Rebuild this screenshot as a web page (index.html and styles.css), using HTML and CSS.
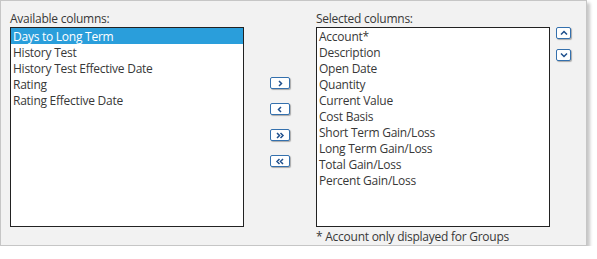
FILE: index.html
```html
<!DOCTYPE html>
<html lang="en">
<head>
    <meta charset="UTF-8">
    <title>Columns</title>
    <link rel="stylesheet" href="styles.css">
</head>
<body>
    <div class="panel">
        <div class="column">
            <div class="label">Available columns:</div>
            <div class="listbox">
                <div class="item selected">Days to Long Term</div>
                <div class="item">History Test</div>
                <div class="item">History Test Effective Date</div>
                <div class="item">Rating</div>
                <div class="item">Rating Effective Date</div>
            </div>
        </div>

        <div class="moves">
            <button class="btn" title="Add">
                <svg width="8" height="7" viewBox="0 0 8 7"><path d="M3 1 L5.5 3.5 L3 6" /></svg>
            </button>
            <button class="btn" title="Remove">
                <svg width="8" height="7" viewBox="0 0 8 7"><path d="M5 1 L2.5 3.5 L5 6" /></svg>
            </button>
            <button class="btn" title="Add all">
                <svg width="10" height="7" viewBox="0 0 10 7"><path d="M2 1 L4.5 3.5 L2 6 M5.5 1 L8 3.5 L5.5 6" /></svg>
            </button>
            <button class="btn" title="Remove all">
                <svg width="10" height="7" viewBox="0 0 10 7"><path d="M4.5 1 L2 3.5 L4.5 6 M8 1 L5.5 3.5 L8 6" /></svg>
            </button>
        </div>

        <div class="column">
            <div class="label">Selected columns:</div>
            <div class="listbox">
                <div class="item">Account*</div>
                <div class="item">Description</div>
                <div class="item">Open Date</div>
                <div class="item">Quantity</div>
                <div class="item">Current Value</div>
                <div class="item">Cost Basis</div>
                <div class="item">Short Term Gain/Loss</div>
                <div class="item">Long Term Gain/Loss</div>
                <div class="item">Total Gain/Loss</div>
                <div class="item">Percent Gain/Loss</div>
            </div>
            <div class="note">* Account only displayed for Groups</div>
        </div>

        <div class="order">
            <button class="btn small" title="Move up">
                <svg width="8" height="6" viewBox="0 0 8 6"><path d="M1 4.5 L4 1.5 L7 4.5" /></svg>
            </button>
            <button class="btn small" title="Move down">
                <svg width="8" height="6" viewBox="0 0 8 6"><path d="M1 1.5 L4 4.5 L7 1.5" /></svg>
            </button>
        </div>
    </div>
</body>
</html>
```

FILE: styles.css
```css
body {
    margin: 0;
    background-color: #fff;
    font-family: "Open Sans", "Noto Sans", Arial, sans-serif;
    font-size: 12px;
    color: #383838;
}

.panel {
    width: 576px;
    height: 244px;
    padding: 0 0 0 9px;
    display: flex;
    background-color: #f2f2f2;
    border: 1px solid #c6c6c6;
    box-shadow: 3px 3px 3px rgba(0, 0, 0, 0.22);
}

.column {
    width: 234px;
    display: flex;
    flex-direction: column;
}

.label {
    height: 26px;
    line-height: 15px;
    padding-top: 10px;
    box-sizing: border-box;
    letter-spacing: -0.25px;
}

.listbox {
    height: 198px;
    background-color: #fff;
    border: 1px solid #222;
    letter-spacing: -0.25px;
}

.item {
    height: 16px;
    line-height: 18px;
    padding-left: 2px;
    white-space: nowrap;
}

.item.selected {
    background-color: #2a9edb;
    color: #fff;
}

.note {
    margin-top: 2px;
    line-height: 16px;
    letter-spacing: -0.25px;
}

.moves {
    width: 72px;
    padding-top: 76px;
    display: flex;
    flex-direction: column;
    align-items: center;
    gap: 14px;
}

.btn {
    width: 20px;
    height: 12px;
    padding: 0;
    display: flex;
    align-items: center;
    justify-content: center;
    background-color: #fff;
    border: 1.5px solid #3470ad;
    border-radius: 2px;
    box-shadow: 1px 1px 1px rgba(0, 0, 0, 0.3);
    cursor: pointer;
}

.btn svg path {
    fill: none;
    stroke: #1e4f8c;
    stroke-width: 1.5;
}

.order {
    padding: 26px 0 0 6px;
    display: flex;
    flex-direction: column;
    gap: 10px;
}

.btn.small {
    width: 15px;
    height: 12px;
}
```
